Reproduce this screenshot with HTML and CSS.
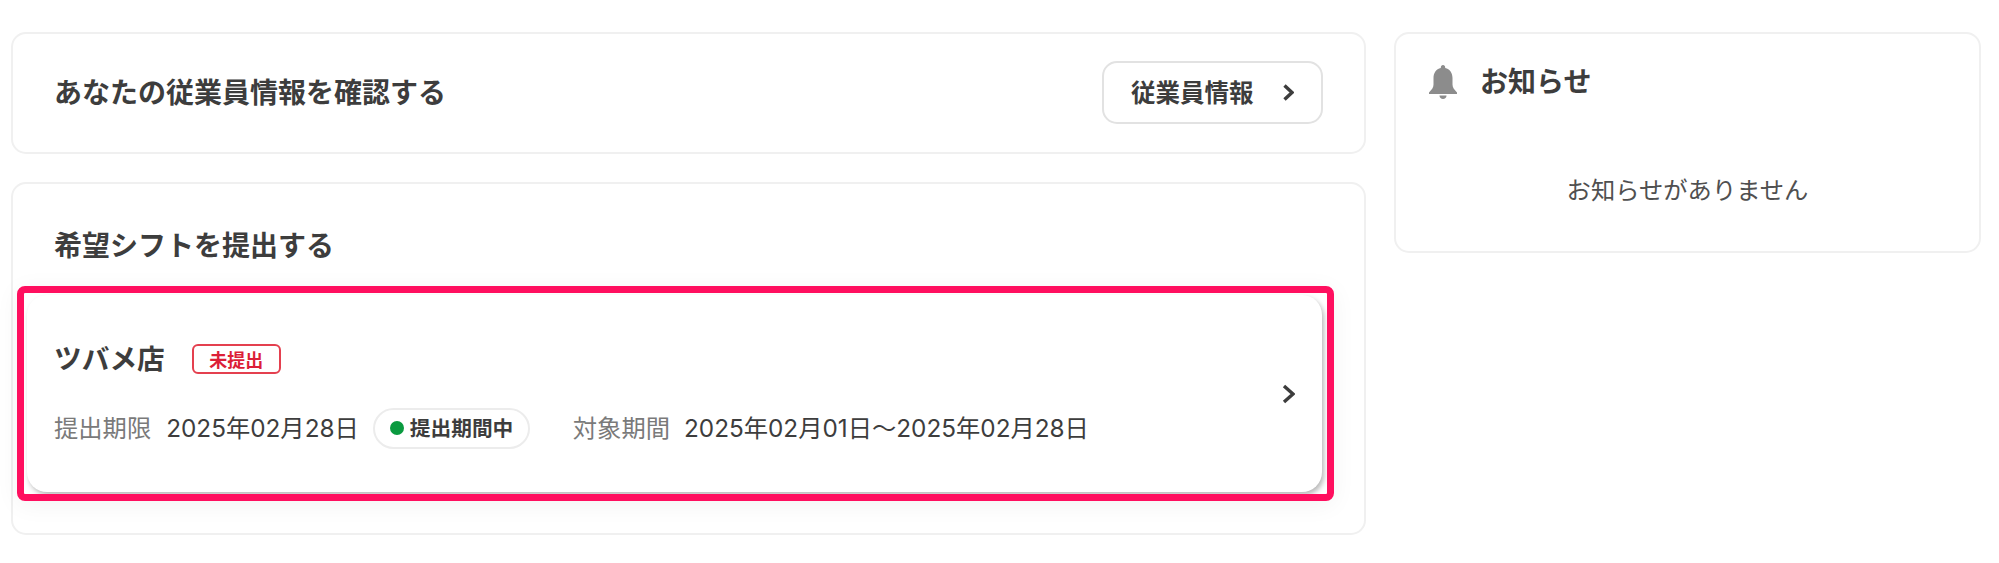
FILE: index.html
```html
<!DOCTYPE html>
<html lang="ja">
<head>
<meta charset="utf-8">
<title>ホーム</title>
<link rel="stylesheet" href="styles.css">
</head>
<body>
<main class="page">
  <div class="main-col">
    <section class="card employee">
      <h2 class="title">あなたの従業員情報を確認する</h2>
      <a class="btn"><span class="btn-text">従業員情報</span>
        <svg class="chev-sm" viewBox="0 0 11 17"><path d="M1.500 1.500L9 8.500L1.500 15.500"/></svg>
      </a>
    </section>
    <section class="card shift">
      <h2 class="title">希望シフトを提出する</h2>
      <div class="highlight">
        <div class="store">
          <div class="store-body">
            <div class="store-head">
              <span class="store-name">ツバメ店</span>
              <span class="tag">未提出</span>
            </div>
            <div class="meta">
              <span class="label">提出期限</span>
              <span class="value">2025年02月28日</span>
              <span class="pill"><i class="dot"></i>提出期間中</span>
              <span class="label second">対象期間</span>
              <span class="value">2025年02月01日～2025年02月28日</span>
            </div>
          </div>
          <svg class="chev-lg" viewBox="0 0 13 20"><path d="M2 2L11 10L2 18"/></svg>
        </div>
      </div>
    </section>
  </div>
  <aside class="card notice">
    <div class="notice-head">
      <svg class="bell" viewBox="0 0 28 34"><path d="M14 0c1.300 0 2.200 1 2.200 2.400v.7c4.700 1.200 7.300 5 7.300 10v6.500c0 3 1.500 5 4.500 7.900v1.500H0v-1.500c3-2.900 4.500-4.900 4.500-7.900v-6.500c0-5 2.600-8.800 7.300-10v-.7C11.800 1 12.700 0 14 0z"/><path d="M10.500 30.500h7c0 2-1.500 3.500-3.500 3.500s-3.500-1.500-3.500-3.500z"/></svg>
      <h2 class="title">お知らせ</h2>
    </div>
    <p class="empty">お知らせがありません</p>
  </aside>
</main>
</body>
</html>
```
FILE: styles.css
```css
* { box-sizing: border-box; }
html, body { margin: 0; padding: 0; background: #fff; }
body {
  font-family: "Inter", "Noto Sans CJK JP", sans-serif;
  color: #3d3d3d;
  height: 563px;
  overflow: hidden;
}
.page {
  display: flex;
  align-items: flex-start;
  gap: 28px;
  padding: 32px 17px 0 11px;
}
.main-col {
  width: 1355px;
  display: flex;
  flex-direction: column;
  gap: 28px;
}
.card {
  background: #fff;
  border: 2px solid #f0f0f0;
  border-radius: 15px;
}
.title {
  margin: 0;
  font-size: 28px;
  line-height: 40px;
  font-weight: 700;
}
.employee {
  height: 122px;
  display: flex;
  align-items: center;
  justify-content: space-between;
  padding: 0 41px 0 41px;
}
.employee .title { line-height: 39px; }
.btn {
  width: 221px;
  height: 63px;
  margin-bottom: 1px;
  border: 2px solid #e2e2e2;
  border-radius: 15px;
  display: flex;
  align-items: center;
  justify-content: space-between;
  padding: 0 27px 0 27px;
  font-size: 24.500px;
  font-weight: 700;
}
.btn-text { padding-bottom: 3px; }
.chev-sm, .chev-lg {
  fill: none;
  stroke: #3d3d3d;
  stroke-width: 3.400;
  flex: none;
}
.chev-sm { width: 11px; height: 17px; }
.chev-lg { width: 13px; height: 20px; }
.shift {
  height: 353px;
  padding: 42px 0 0 0;
}
.shift .title { padding-left: 41px; }
.highlight {
  margin: 20px 0 0 4px;
  width: 1317px;
  height: 215px;
  border: 7px solid #ff0f5f;
  border-radius: 8px;
  padding: 2px 5px 2px 3px;
  overflow: hidden;
  box-shadow: 0 4px 24px rgba(0,0,0,.05);
}
.store {
  height: 100%;
  background: #fff;
  border-radius: 20px;
  box-shadow: 2px 3px 5px rgba(0,0,0,.28);
  display: flex;
  align-items: center;
  justify-content: space-between;
  padding: 0 27px 0 27px;
}
.store-head {
  display: flex;
  align-items: center;
  gap: 27px;
}
.store-name {
  font-size: 27.700px;
  font-weight: 700;
  line-height: 40px;
}
.tag {
  width: 89px;
  height: 30px;
  border: 2px solid #e4404f;
  border-radius: 6px;
  color: #dc1f38;
  font-size: 18px;
  font-weight: 700;
  display: flex;
  align-items: center;
  justify-content: center;
}
.meta {
  margin-top: 29px;
  display: flex;
  align-items: center;
  font-size: 24.300px;
}
.label { color: #7a7a7a; padding-bottom: 4px; }
.value { margin-left: 15px; padding-bottom: 4px; }
.second { margin-left: 43px; }
.second + .value { margin-left: 14px; }
.pill {
  margin-left: 14px;
  height: 41px;
  width: 157px;
  padding: 0 0 2px 15px;
  border: 2px solid #ececec;
  border-radius: 21px;
  display: flex;
  align-items: center;
  gap: 6px;
  font-size: 20.700px;
  font-weight: 700;
}
.dot {
  width: 14px;
  height: 14px;
  border-radius: 50%;
  background: #0a9a3f;
  margin-top: 2px;
}
.notice {
  width: 587px;
  height: 221px;
  padding: 28px 33px;
}
.notice-head {
  display: flex;
  align-items: center;
  gap: 23px;
}
.bell {
  width: 28px;
  height: 34px;
  fill: #8c8c8c;
}
.empty {
  margin: 71px 0 0;
  text-align: center;
  font-size: 24.300px;
  line-height: 34px;
  color: #505050;
}
```
